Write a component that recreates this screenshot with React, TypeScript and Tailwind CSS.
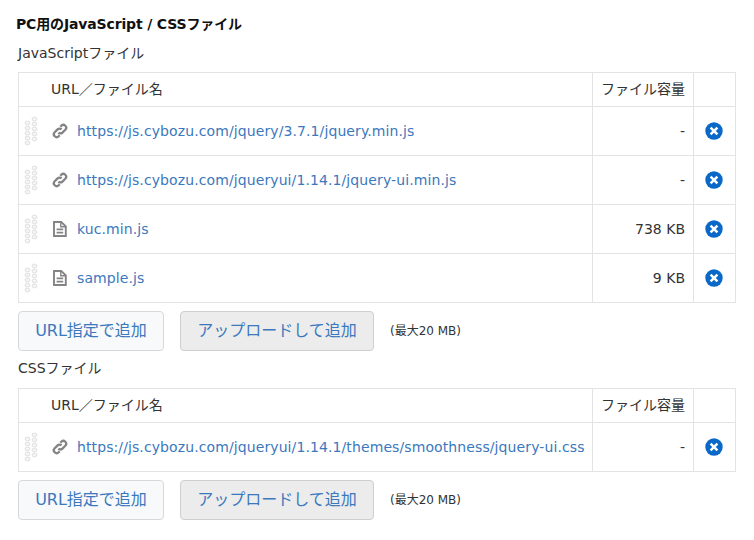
import React from "react";

const font = { fontFamily: '"DejaVu Sans", "Noto Sans CJK JP", sans-serif' };

type FileRow = { name: string; kind: "url" | "file"; size: string };

const jsFiles: FileRow[] = [
  { name: "https://js.cybozu.com/jquery/3.7.1/jquery.min.js", kind: "url", size: "-" },
  { name: "https://js.cybozu.com/jqueryui/1.14.1/jquery-ui.min.js", kind: "url", size: "-" },
  { name: "kuc.min.js", kind: "file", size: "738 KB" },
  { name: "sample.js", kind: "file", size: "9 KB" },
];

const cssFiles: FileRow[] = [
  { name: "https://js.cybozu.com/jqueryui/1.14.1/themes/smoothness/jquery-ui.css", kind: "url", size: "-" },
];

function DragHandle() {
  const dots = [
    [4.5, 7], [4.5, 12], [4.5, 17], [4.5, 22], [4.5, 27],
    [11.5, 3], [11.5, 8], [11.5, 13], [11.5, 18], [11.5, 23],
  ];
  return (
    <svg width="16" height="30" viewBox="0 0 16 30" className="shrink-0">
      {dots.map(([x, y]) => (
        <ellipse key={`${x}-${y}`} cx={x} cy={y} rx="2.4" ry="1.9" fill="#f5f5f5" stroke="#dcdcdc" strokeWidth="0.9" />
      ))}
    </svg>
  );
}

function LinkIcon() {
  return (
    <svg width="16" height="16" viewBox="0 0 16 16" fill="none" stroke="#848484" strokeWidth="2.3" className="shrink-0">
      <path d="M6.4 9.6a2.8 2.8 0 0 0 4 0l2.9-2.9a2.8 2.8 0 0 0-4-4l-1 1" />
      <path d="M9.6 6.4a2.8 2.8 0 0 0-4 0l-2.9 2.9a2.8 2.8 0 0 0 4 4l1-1" />
    </svg>
  );
}

function FileIcon() {
  return (
    <svg width="16" height="16" viewBox="0 0 16 16" fill="none" className="shrink-0">
      <path d="M2 1h7.2L13.8 5.4V15H2z" stroke="#848484" strokeWidth="1.9" />
      <path d="M8.8 1v4.8h5" stroke="#848484" strokeWidth="1.4" />
      <path d="M4.6 8.4h6.6M4.6 11.6h6.6" stroke="#848484" strokeWidth="1.8" />
    </svg>
  );
}

function RemoveIcon() {
  return (
    <svg width="18" height="18" viewBox="0 0 18 18" className="block ml-[11px]">
      <circle cx="9" cy="9" r="8.7" fill="#0a68c8" />
      <path d="M5.6 5.6l6.8 6.8M12.4 5.6l-6.8 6.8" stroke="#ffffff" strokeWidth="2.5" />
    </svg>
  );
}

function FileTable({ rows }: { rows: FileRow[] }) {
  return (
    <table className="w-[717px] table-fixed border-collapse text-[14px] text-[#333333]">
      <colgroup>
        <col className="w-[574px]" />
        <col className="w-[101px]" />
        <col className="w-[42px]" />
      </colgroup>
      <thead>
        <tr className="h-[34px]">
          <th className="border border-[#e3e3e3] pl-[32px] text-left font-normal">URL／ファイル名</th>
          <th className="border border-[#e3e3e3] pr-[8px] text-right font-normal">ファイル容量</th>
          <th className="border border-[#e3e3e3]" />
        </tr>
      </thead>
      <tbody>
        {rows.map((row) => (
          <tr key={row.name} className="h-[49px]">
            <td className="border border-[#e3e3e3] pl-[4px]">
              <div className="flex items-center">
                <DragHandle />
                <span className="ml-[13px] mr-[9px] flex">
                  {row.kind === "url" ? <LinkIcon /> : <FileIcon />}
                </span>
                <a className="text-[#3b78bd] whitespace-nowrap tracking-[0.1px]">{row.name}</a>
              </div>
            </td>
            <td className="border border-[#e3e3e3] pr-[8px] text-right">{row.size}</td>
            <td className="border border-[#e3e3e3]">
              <RemoveIcon />
            </td>
          </tr>
        ))}
      </tbody>
    </table>
  );
}

function AddButtons() {
  return (
    <div className="flex items-center mt-[8px]">
      <button className="h-[40px] w-[146px] rounded-[4px] border border-[#d8d8d8] bg-[#f7f9fa] text-[16px] text-[#3b78bd]">
        URL指定で追加
      </button>
      <button className="ml-[16px] h-[40px] w-[194px] rounded-[4px] border border-[#cfcfcf] bg-[#ececec] text-[16px] text-[#3b78bd]">
        アップロードして追加
      </button>
      <span className="ml-[16px] text-[12px] text-[#333333]">(最大20 MB)</span>
    </div>
  );
}

export default function App() {
  return (
    <div className="h-[540px] w-[754px] overflow-hidden bg-white pl-[18px] pt-[14px]" style={font}>
      <h2 className="-ml-[2px] text-[14px] font-bold leading-[20px] tracking-[-0.15px] text-[#111111]">
        PC用のJavaScript / CSSファイル
      </h2>
      <div className="mt-[9px] mb-[9px] text-[14px] leading-[20px] text-[#333333]">JavaScriptファイル</div>
      <FileTable rows={jsFiles} />
      <AddButtons />
      <div className="mt-[7px] mb-[10px] text-[14px] leading-[20px] text-[#333333]">CSSファイル</div>
      <FileTable rows={cssFiles} />
      <AddButtons />
    </div>
  );
}
